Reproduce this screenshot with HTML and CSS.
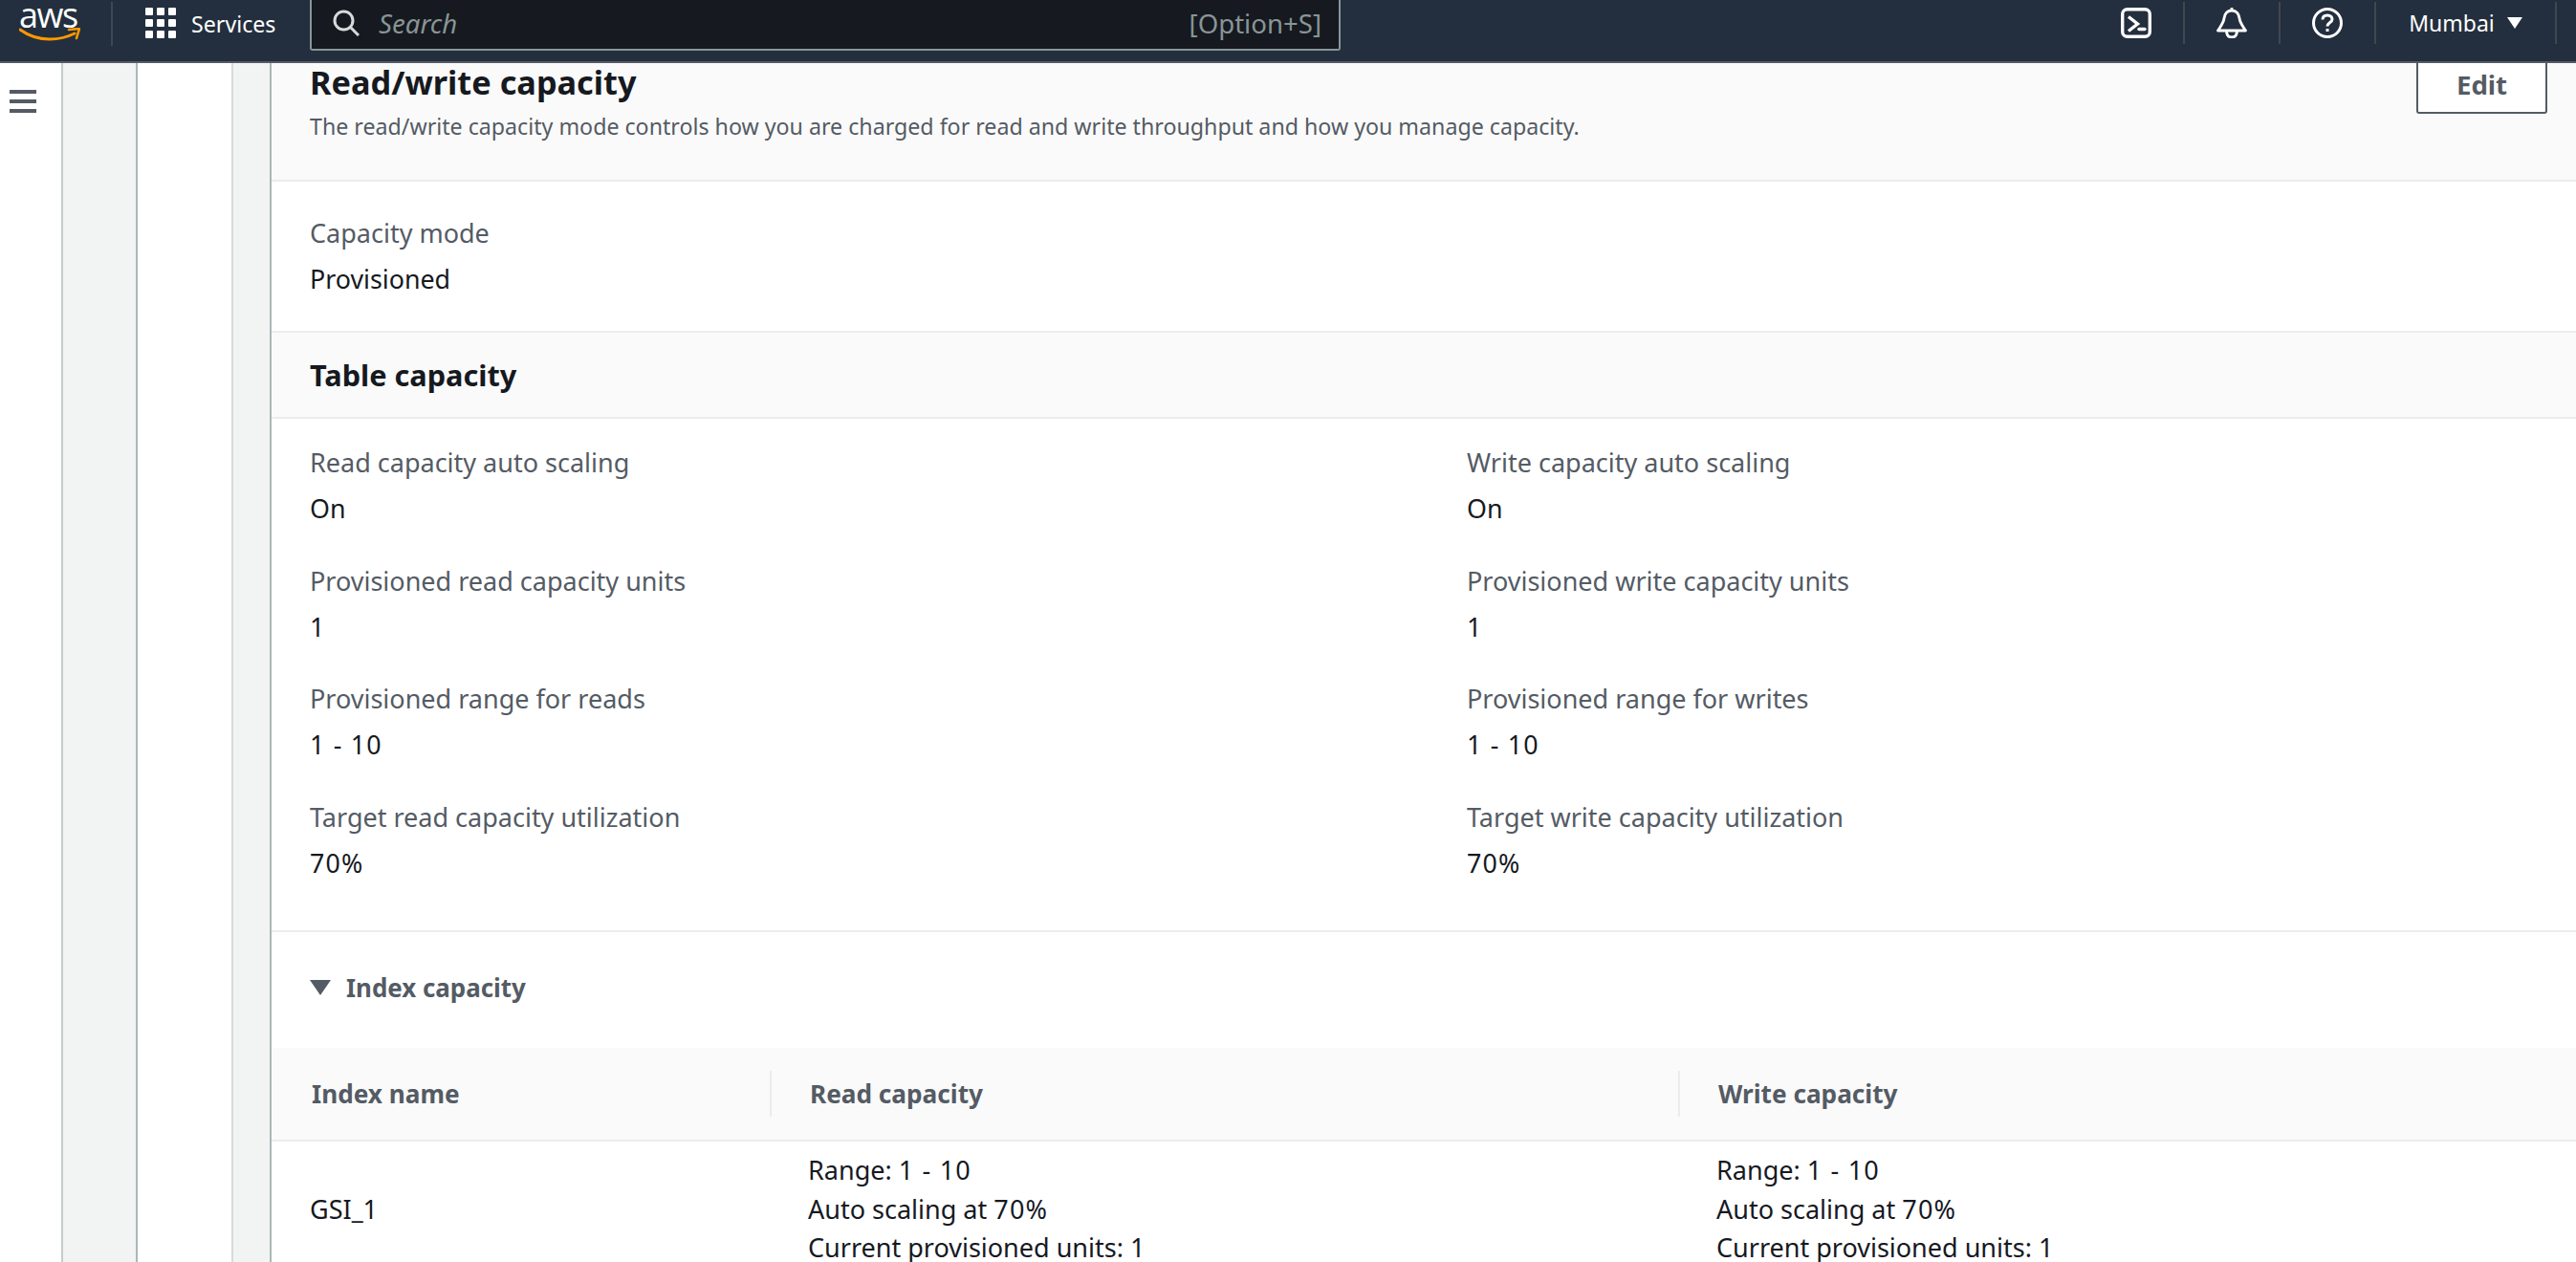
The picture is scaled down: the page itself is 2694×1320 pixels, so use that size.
FILE: index.html
```html
<!DOCTYPE html>
<html lang="en">
<head>
    <meta charset="UTF-8">
    <meta name="viewport" content="width=device-width, initial-scale=1.0">
    <title>Read/write capacity</title>
    <link rel="stylesheet" href="styles.css">
</head>
<body>
    <header class="topbar">
        <div class="logo">
            <span class="logo-text">aws</span>
            <svg class="logo-smile" viewBox="0 0 64 14" width="64" height="14">
                <path d="M1 2C12 10 22 12 32 12C42 12 50 10 58 6" fill="none" stroke="#f90" stroke-width="3" stroke-linecap="round"/>
                <path d="M52 2L63 1L60 11" fill="none" stroke="#f90" stroke-width="2.6" stroke-linejoin="round" stroke-linecap="round"/>
            </svg>
        </div>
        <div class="services">
            <svg viewBox="0 0 32 32" width="32" height="32" fill="#fff">
                <rect x="0" y="0" width="8" height="8" rx="1"/><rect x="12" y="0" width="8" height="8" rx="1"/><rect x="24" y="0" width="8" height="8" rx="1"/>
                <rect x="0" y="12" width="8" height="8" rx="1"/><rect x="12" y="12" width="8" height="8" rx="1"/><rect x="24" y="12" width="8" height="8" rx="1"/>
                <rect x="0" y="24" width="8" height="8" rx="1"/><rect x="12" y="24" width="8" height="8" rx="1"/><rect x="24" y="24" width="8" height="8" rx="1"/>
            </svg>
            <span>Services</span>
        </div>
        <div class="search">
            <svg viewBox="0 0 28 28" width="28" height="28" fill="none" stroke="#d5dbdb" stroke-width="3">
                <circle cx="11.5" cy="11.5" r="9.5"/>
                <path d="M18.5 18.5L27 27"/>
            </svg>
            <span class="search-text">Search</span>
            <span class="search-key">[Option+S]</span>
        </div>
        <div class="top-right">
            <div class="top-item">
                <svg viewBox="0 0 32 32" width="32" height="32" fill="none" stroke="#fff" stroke-width="3.4">
                    <rect x="1.7" y="1.7" width="28.6" height="28.6" rx="5"/>
                    <path d="M8 9.5L17.5 17L8 24.5"/>
                    <path d="M19 22.5H25" stroke-linecap="round"/>
                </svg>
            </div>
            <div class="top-item">
                <svg viewBox="0 0 32 32" width="32" height="32" fill="none" stroke="#fff" stroke-width="2.8" stroke-linejoin="round">
                    <path d="M16 0V3"/>
                    <path d="M16 3C11 3 8.5 7 8 11C7.5 16 4 20 1.5 24H30.5C28 20 24.5 16 24 11C23.5 7 21 3 16 3Z"/>
                    <path d="M10.5 24C10.5 29 13 31 16 31C19 31 21.5 29 21.5 24"/>
                </svg>
            </div>
            <div class="top-item">
                <svg viewBox="0 0 32 32" width="32" height="32" fill="none" stroke="#fff" stroke-width="3">
                    <circle cx="16" cy="16" r="14.5"/>
                    <path d="M11 12.5C11 9.5 13 8 16 8C19 8 21 9.8 21 12.2C21 15.5 16 15.5 16 19.5"/>
                    <path d="M16 22V25"/>
                </svg>
            </div>
            <div class="top-item region">
                <span>Mumbai</span>
                <span class="caret"></span>
            </div>
        </div>
    </header>

    <div class="page">
        <div class="rail">
            <svg viewBox="0 0 28 24" width="28" height="24" fill="#545b64">
                <rect y="0" width="28" height="4"/><rect y="10" width="28" height="4"/><rect y="20" width="28" height="4"/>
            </svg>
        </div>
        <div class="gutter gutter-wide"></div>
        <div class="blank"></div>
        <div class="gutter"></div>

        <main class="main">
            <section class="panel-head">
                <div>
                    <h2>Read/write capacity</h2>
                    <p>The read/write capacity mode controls how you are charged for read and write throughput and how you manage capacity.</p>
                </div>
                <button class="edit" type="button">Edit</button>
            </section>

            <div class="mode">
                <div class="label">Capacity mode</div>
                <div class="value">Provisioned</div>
            </div>

            <h3 class="sub-head">Table capacity</h3>

            <div class="kv-grid">
                <div><div class="label">Read capacity auto scaling</div><div class="value">On</div></div>
                <div><div class="label">Write capacity auto scaling</div><div class="value">On</div></div>
                <div><div class="label">Provisioned read capacity units</div><div class="value">1</div></div>
                <div><div class="label">Provisioned write capacity units</div><div class="value">1</div></div>
                <div><div class="label">Provisioned range for reads</div><div class="value"><span class="num">1 - 10</span></div></div>
                <div><div class="label">Provisioned range for writes</div><div class="value"><span class="num">1 - 10</span></div></div>
                <div><div class="label">Target read capacity utilization</div><div class="value"><span class="num">70%</span></div></div>
                <div><div class="label">Target write capacity utilization</div><div class="value"><span class="num">70%</span></div></div>
            </div>

            <div class="expander">
                <span class="expander-caret"></span>
                <span>Index capacity</span>
            </div>

            <div class="table-head">
                <div class="th th-name">Index name</div>
                <div class="th">Read capacity</div>
                <div class="th">Write capacity</div>
            </div>
            <div class="table-row">
                <div class="td td-name">GSI_1</div>
                <div class="td">Range: <span class="num">1 - 10</span><br>Auto scaling at <span class="num">70%</span><br>Current provisioned units: 1</div>
                <div class="td">Range: <span class="num">1 - 10</span><br>Auto scaling at <span class="num">70%</span><br>Current provisioned units: 1</div>
            </div>
        </main>
    </div>
</body>
</html>
```

FILE: styles.css
```css
* {
    box-sizing: border-box;
}
html, body {
    height: 100%;
}
body {
    margin: 0;
    overflow: hidden;
    display: flex;
    flex-direction: column;
    font-family: "Noto Sans", Arial, sans-serif;
    font-size: 27px;
    color: #16191f;
    background-color: #fff;
}

/* top navigation */
.topbar {
    height: 66px;
    flex: none;
    position: relative;
    z-index: 1;
    display: flex;
    align-items: flex-start;
    background-color: #232f3e;
    border-bottom: 2px solid #545b64;
    color: #fff;
}
.logo {
    width: 118px;
    height: 46px;
    margin-top: 2px;
    padding-left: 20px;
    border-right: 2px solid #414750;
    position: relative;
}
.logo-text {
    display: block;
    font-family: "Open Sans", sans-serif;
    font-size: 36px;
    line-height: 28px;
    letter-spacing: -1.5px;
}
.logo-smile {
    position: absolute;
    left: 20px;
    top: 27px;
}
.services {
    width: 206px;
    height: 64px;
    padding: 8px 0 0 34px;
    display: flex;
    gap: 16px;
    font-size: 23.2px;
    line-height: 34px;
}
.search {
    width: 1078px;
    height: 53px;
    display: flex;
    align-items: center;
    padding: 0 18px 4px 22px;
    background-color: #16191f;
    border: 2px solid #879596;
    border-top: none;
    border-radius: 0 0 3px 3px;
}
.search-text {
    margin-left: 20px;
    font-style: italic;
    font-size: 27.6px;
    color: #879596;
}
.search-key {
    margin-left: auto;
    font-size: 27.6px;
    color: #879596;
}
.top-right {
    margin-left: auto;
    display: flex;
    padding-right: 20px;
    margin-top: 2px;
}
.top-item {
    height: 44px;
    width: 100px;
    display: flex;
    align-items: center;
    justify-content: center;
    border-right: 2px solid #414750;
}
.region {
    width: 189px;
    gap: 13px;
    font-size: 23px;
}
.caret {
    width: 0;
    height: 0;
    border-left: 8px solid transparent;
    border-right: 8px solid transparent;
    border-top: 12px solid #fff;
}

/* page columns */
.page {
    flex: 1;
    min-height: 0;
    display: flex;
}
.rail {
    width: 66px;
    flex: none;
    padding: 28px 0 0 10px;
    border-right: 2px solid #c6cccc;
}
.rail svg {
    display: block;
}
.gutter {
    width: 40px;
    flex: none;
    background-color: #f2f3f3;
    border-right: 2px solid #aab7b8;
}
.gutter-wide {
    width: 78px;
}
.blank {
    width: 100px;
    flex: none;
    border-right: 2px solid #d5dbdb;
}
.main {
    flex: 1;
    min-width: 0;
}

/* panel header */
.panel-head {
    height: 124px;
    display: flex;
    justify-content: space-between;
    padding: 0 30px 0 40px;
    background-color: #fafafa;
    border-bottom: 2px solid #eaeded;
}
.panel-head h2 {
    margin: 0;
    font-size: 34.3px;
    line-height: 40px;
    font-weight: 700;
}
.panel-head p {
    margin: 5px 0 0;
    font-size: 23.2px;
    line-height: 42px;
    color: #545b64;
}
.edit {
    width: 137px;
    height: 85px;
    margin-top: -32px;
    padding: 22px 0 0;
    background-color: #fff;
    border: 2px solid #545b64;
    border-radius: 3px;
    font-family: inherit;
    font-size: 27.6px;
    font-weight: 700;
    color: #545b64;
}

.label {
    line-height: 34px;
    margin-bottom: 14px;
    color: #545b64;
}
.value {
    font-size: 26.8px;
    line-height: 34px;
}
.num {
    letter-spacing: 1.2px;
}
.mode {
    height: 156px;
    padding: 37px 40px 0;
}
.sub-head {
    height: 92px;
    margin: 0;
    padding: 0 40px;
    font-size: 30.7px;
    line-height: 88px;
    font-weight: 700;
    background-color: #fafafa;
    border-top: 2px solid #eaeded;
    border-bottom: 2px solid #eaeded;
}
.kv-grid {
    display: grid;
    grid-template-columns: 1210px 1fr;
    align-content: start;
    row-gap: 41.7px;
    height: 537px;
    padding: 29px 40px 0;
    border-bottom: 2px solid #eaeded;
}
.expander {
    height: 115px;
    padding: 0 40px;
    margin-bottom: 6px;
    display: flex;
    align-items: center;
    gap: 16px;
    font-size: 25.9px;
    font-weight: 700;
    color: #545b64;
}
.expander-caret {
    width: 0;
    height: 0;
    border-left: 11px solid transparent;
    border-right: 11px solid transparent;
    border-top: 16px solid #545b64;
}

/* index table */
.table-head,
.table-row {
    display: grid;
    grid-template-columns: 521px 950px 1fr;
}
.table-head {
    height: 98px;
    align-items: center;
    background-color: #fafafa;
    border-bottom: 2px solid #eaeded;
    font-size: 26.2px;
}
.th {
    height: 48px;
    padding-left: 40px;
    line-height: 48px;
    font-weight: 700;
    color: #545b64;
    border-left: 2px solid #eaeded;
}
.th-name {
    padding-left: 42px;
    border-left: none;
}
.table-row {
    padding-top: 10px;
}
.td {
    padding-left: 40px;
    line-height: 40.5px;
}
.td-name {
    align-self: center;
}
```
